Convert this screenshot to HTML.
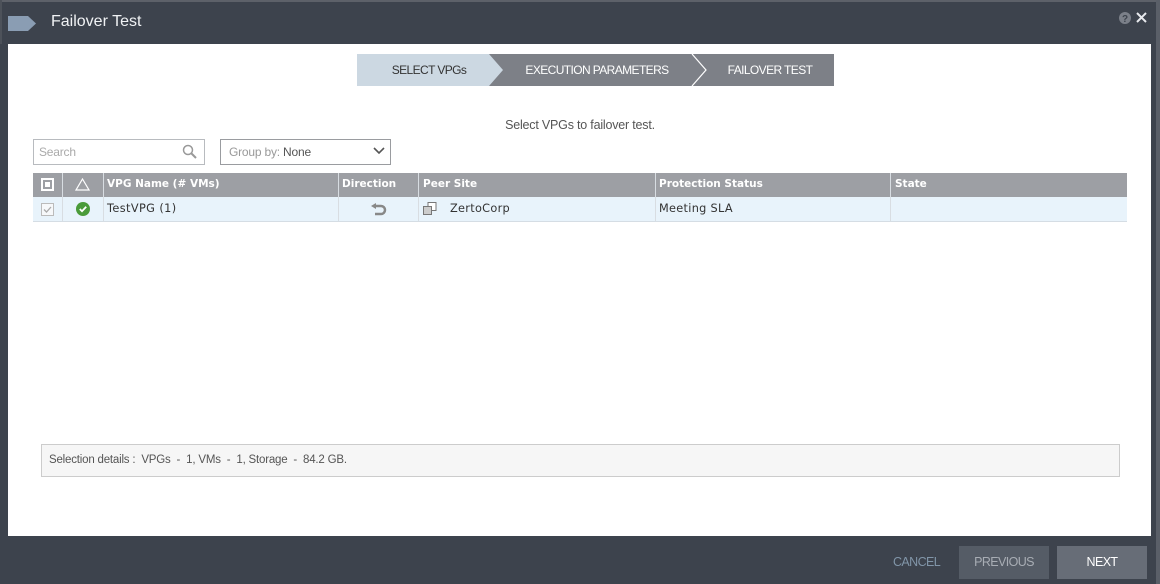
<!DOCTYPE html>
<html><head><meta charset="utf-8"><style>
*{margin:0;padding:0;box-sizing:border-box}
body{width:1160px;height:584px;overflow:hidden;background:#3d434d;font-family:"DejaVu Sans",Verdana,sans-serif;position:relative}
.ab{position:absolute}
.seg{font-family:"Liberation Sans",sans-serif;font-size:12px;letter-spacing:-0.2px}
.th{color:#fff;font-size:10.5px;font-weight:bold;top:178px}
.td{color:#333;font-size:11.3px;top:202px}
</style></head><body>
<div class="ab" style="left:0;top:0;width:1160px;height:2px;background:#5d6169"></div>
<div class="ab" style="left:1156px;top:0;width:4px;height:584px;background:#5a5f68"></div>
<div class="ab" style="left:0;top:0;width:2px;height:44px;background:#4d525a"></div>
<svg class="ab" style="left:8px;top:16px" width="28" height="15"><polygon points="0,0 20,0 28,7.5 20,15 0,15" fill="#8a9db3"/></svg>
<div class="ab" style="left:51px;top:13px;color:#f0f2f4;font-family:'Liberation Sans',sans-serif;font-size:16px">Failover Test</div>
<svg class="ab" style="left:1119px;top:11px" width="32" height="14">
<circle cx="6" cy="7" r="6" fill="#7b8089"/><text x="6" y="11" font-size="10" font-weight="bold" text-anchor="middle" fill="#3d434d" font-family="Liberation Sans">?</text>
<path d="M18 2 L27 11 M27 2 L18 11" stroke="#e8eaee" stroke-width="2"/></svg>
<div class="ab" style="left:8px;top:44px;width:1143px;height:492px;background:#fff"></div>
<svg class="ab" style="left:357px;top:54px" width="477" height="32">
<rect x="0" y="0" width="477" height="32" fill="#7d8087"/>
<polygon points="0,0 132,0 146,16 132,32 0,32" fill="#ccd8e2"/>
<polyline points="335,0 349,16 335,32" fill="none" stroke="#fff" stroke-width="1.2"/>
<text x="72" y="20" font-size="12" letter-spacing="-0.6" text-anchor="middle" fill="#333" font-family="Liberation Sans">SELECT VPGs</text>
<text x="240" y="20" font-size="12" letter-spacing="-0.6" text-anchor="middle" fill="#fff" font-family="Liberation Sans">EXECUTION PARAMETERS</text>
<text x="413" y="20" font-size="12" letter-spacing="-0.6" text-anchor="middle" fill="#fff" font-family="Liberation Sans">FAILOVER TEST</text>
</svg>
<div class="ab seg" style="left:0;width:1160px;top:118px;text-align:center;color:#555;font-size:12.5px">Select VPGs to failover test.</div>
<div class="ab" style="left:33px;top:139px;width:172px;height:26px;border:1px solid #b8bbbf"></div>
<div class="ab seg" style="left:39px;top:145px;color:#aaa">Search</div>
<svg class="ab" style="left:182px;top:144px" width="16" height="16"><circle cx="6" cy="6" r="4.5" fill="none" stroke="#999" stroke-width="1.5"/><path d="M9.5 9.5 L14 14" stroke="#999" stroke-width="2"/></svg>
<div class="ab" style="left:220px;top:139px;width:171px;height:26px;border:1px solid #9a9ca0"></div>
<div class="ab seg" style="left:229px;top:145px;color:#999">Group by: <span style="color:#555">None</span></div>
<svg class="ab" style="left:373px;top:147px" width="12" height="8"><path d="M1 1 L6 6 L11 1" fill="none" stroke="#555" stroke-width="1.6"/></svg>
<div class="ab" style="left:33px;top:173px;width:1094px;height:24px;background:#9d9fa4"></div>
<div class="ab" style="left:33px;top:197px;width:1094px;height:25px;background:#e8f3fb;border-bottom:1px solid #d5dde4"></div>
<div class="ab" style="left:62px;top:173px;width:1px;height:48px;background:#d8dde2"></div>
<div class="ab" style="left:103px;top:173px;width:1px;height:48px;background:#d8dde2"></div>
<div class="ab" style="left:338px;top:173px;width:1px;height:48px;background:#d8dde2"></div>
<div class="ab" style="left:418px;top:173px;width:1px;height:48px;background:#d8dde2"></div>
<div class="ab" style="left:655px;top:173px;width:1px;height:48px;background:#d8dde2"></div>
<div class="ab" style="left:890px;top:173px;width:1px;height:48px;background:#d8dde2"></div>
<div class="ab" style="left:41px;top:178px;width:13px;height:13px;border:2px solid #fff;"><div style="margin:2px;width:5px;height:5px;background:#fff"></div></div>
<svg class="ab" style="left:75px;top:178px" width="15" height="13"><polygon points="7.5,1 14,12 1,12" fill="none" stroke="#fff" stroke-width="1.2"/></svg>
<div class="ab th" style="left:107px">VPG Name (# VMs)</div>
<div class="ab th" style="left:342px">Direction</div>
<div class="ab th" style="left:423px">Peer Site</div>
<div class="ab th" style="left:659px">Protection Status</div>
<div class="ab th" style="left:895px">State</div>
<div class="ab" style="left:41px;top:203px;width:13px;height:13px;border:1px solid #bbb;background:#f6f8fa"></div>
<svg class="ab" style="left:41px;top:203px" width="13" height="13"><path d="M3 6.5 L5.5 9 L10 4" fill="none" stroke="#aaa" stroke-width="1.3"/></svg>
<svg class="ab" style="left:76px;top:202px" width="14" height="14"><circle cx="7" cy="7" r="7" fill="#4a9b3a"/><path d="M3.8 7 L6 9.2 L10.2 4.8" fill="none" stroke="#fff" stroke-width="1.8"/></svg>
<div class="ab td" style="left:107px;letter-spacing:0.4px">TestVPG (1)</div>
<svg class="ab" style="left:370px;top:203px" width="18" height="13"><path d="M4 3 H11 A4 4 0 0 1 11 11 H5" fill="none" stroke="#888" stroke-width="2.5"/><polygon points="1,3 6,0 6,6" fill="#888"/></svg>
<svg class="ab" style="left:423px;top:202px" width="14" height="13"><rect x="5" y="0.5" width="8" height="8" fill="#fff" stroke="#777"/><rect x="0.5" y="4.5" width="8" height="8" fill="#ccc" stroke="#777"/></svg>
<div class="ab td" style="left:450px;letter-spacing:0.3px">ZertoCorp</div>
<div class="ab td" style="left:659px;letter-spacing:0.3px">Meeting SLA</div>
<div class="ab" style="left:41px;top:444px;width:1079px;height:33px;border:1px solid #ccc;background:#f6f6f6"></div>
<div class="ab seg" style="left:49px;top:454px;color:#555;font-size:11.5px">Selection details :&nbsp; VPGs&nbsp; -&nbsp; 1, VMs&nbsp; -&nbsp; 1, Storage&nbsp; -&nbsp; 84.2 GB.</div>
<div class="ab seg" style="left:893px;top:555px;color:#8195a8;font-size:12.5px;letter-spacing:-0.6px">CANCEL</div>
<div class="ab seg" style="left:959px;top:546px;width:90px;height:33px;background:#555c66;color:#a8adb4;font-size:12.5px;letter-spacing:-0.6px;text-align:center;line-height:33px">PREVIOUS</div>
<div class="ab seg" style="left:1057px;top:546px;width:90px;height:33px;background:#676d77;color:#fff;font-size:12.5px;letter-spacing:-0.6px;text-align:center;line-height:33px">NEXT</div>
</body></html>
